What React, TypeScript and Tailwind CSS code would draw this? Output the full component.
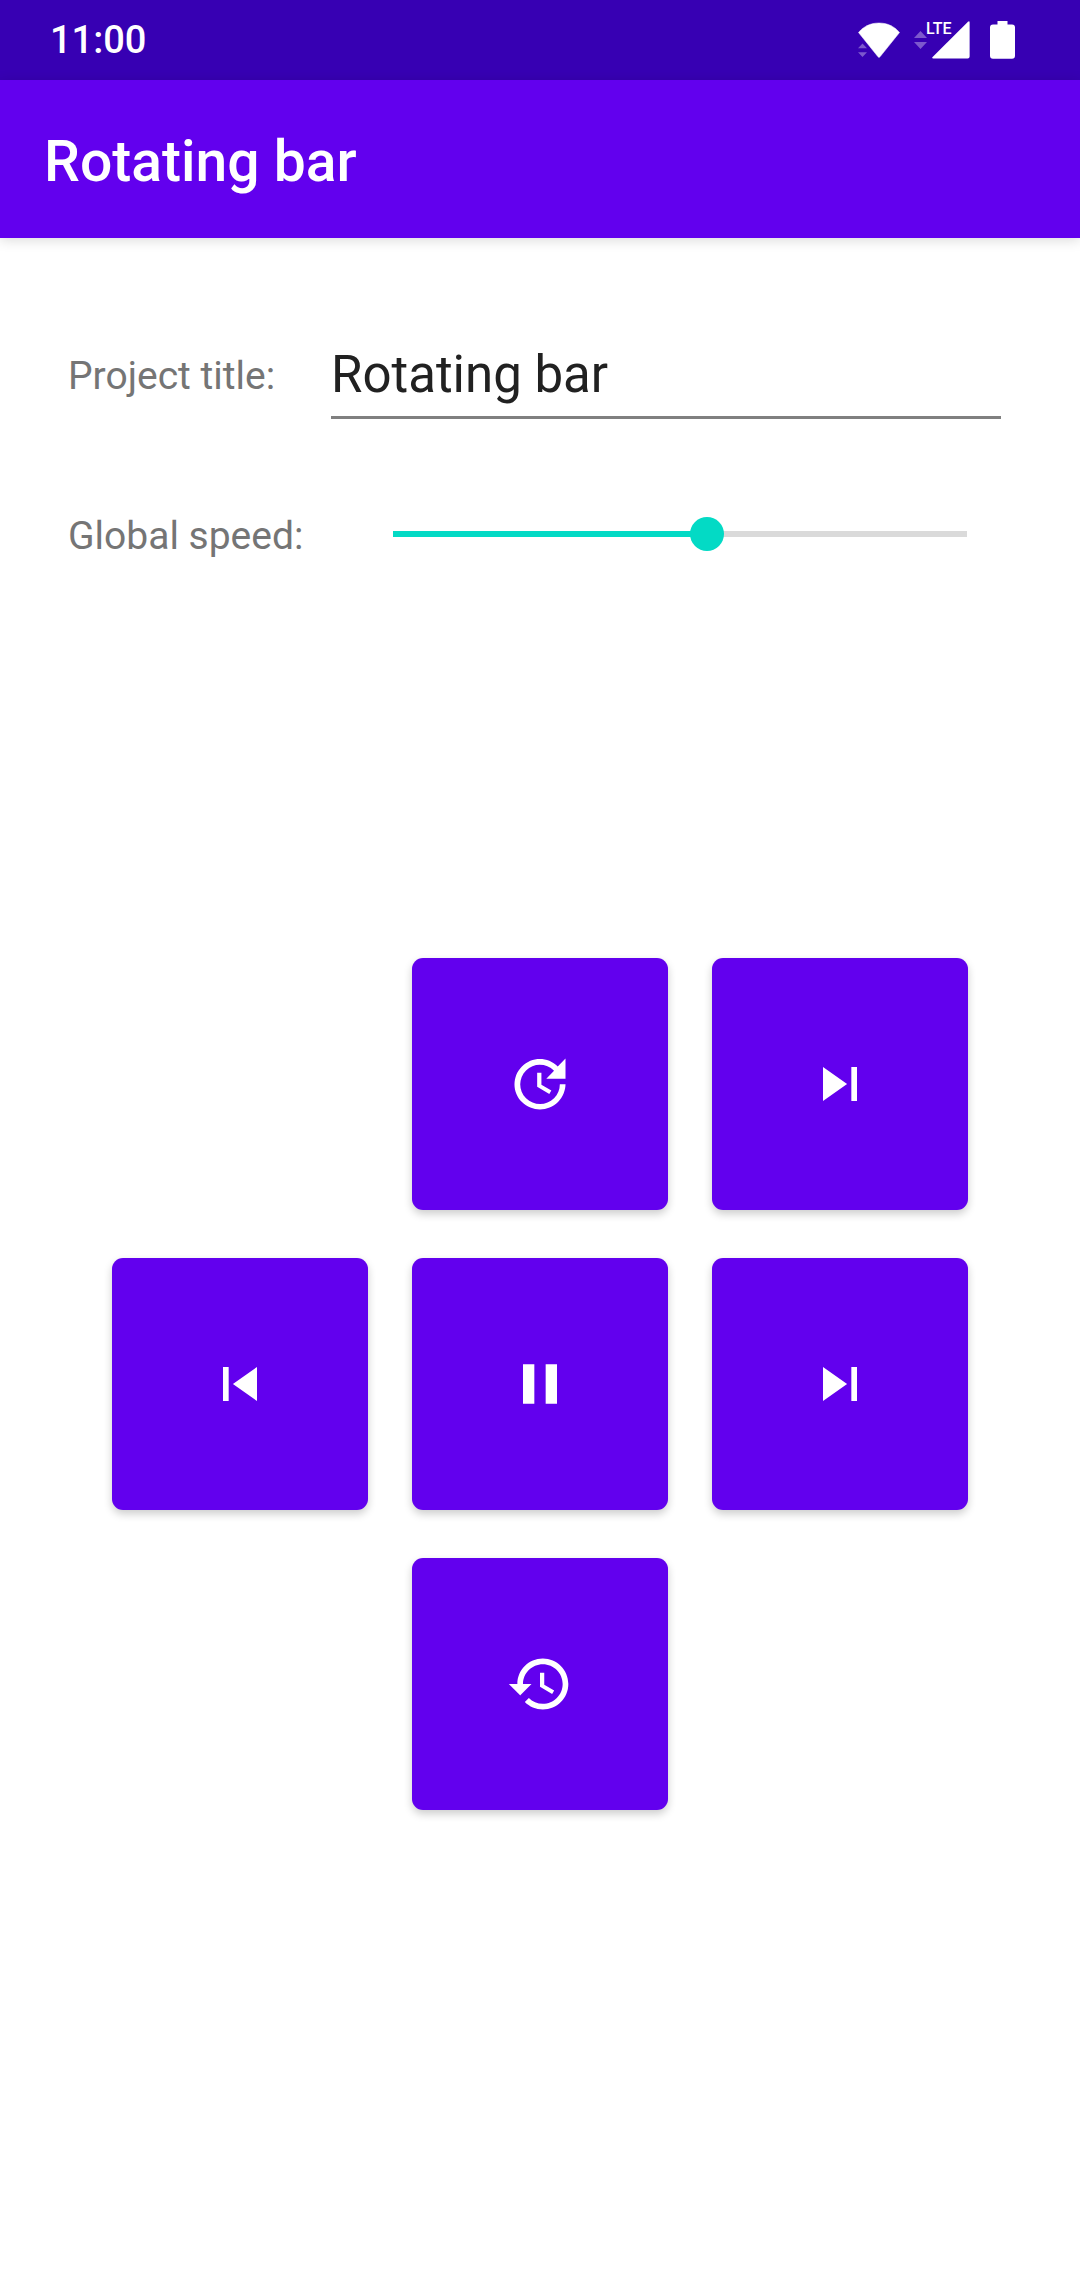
import { useState } from "react";
import type { ReactNode } from "react";

function WifiIcon() {
  return (
    <svg viewBox="0 0 42 38" className="h-[38px] w-[42px]" aria-hidden="true">
      <path d="M0.5 11.5C6 5 13 2 21 2s15 3 20.500 9.500L22 35.800q-1 1.200-2 0z" fill="#fff" stroke="#fff" strokeWidth="0.500" strokeLinejoin="round" />
      <path d="M4.500 22.500L9 27.200H0z M4.500 36L9 31.200H0z" fill="#7d58cd" />
    </svg>
  );
}

function SignalIcon() {
  return (
    <svg viewBox="0 0 56 38" className="h-[38px] w-[56px]" aria-hidden="true">
      <path d="M6.500 10L13 17H0z M6.500 28L13 21H0z" fill="#7d58cd" />
      <path d="M18.600 36L54 0.700Q55.600-0.400 55.600 1.500V35.500Q55.600 37.500 53.600 37.500H19.400Q17.400 37.400 18.600 36z" fill="#fff" />
    </svg>
  );
}

function BatteryIcon() {
  return (
    <svg viewBox="0 0 25 38" className="h-[38px] w-[25px]" aria-hidden="true">
      <path d="M7.500 0H17.500V3.500H22Q25 3.500 25 6.500V34.500Q25 37.700 22 37.700H3Q0 37.700 0 34.500V6.500Q0 3.500 3 3.500H7.500z" fill="#fff" />
    </svg>
  );
}

function Icon({ d }: { d: string }) {
  return (
    <svg viewBox="0 0 24 24" fill="currentColor" className="size-[68px]" aria-hidden="true">
      <path d={d} />
    </svg>
  );
}

const NEXT = "M6 18l8.500-6L6 6v12zM16 6v12h2V6h-2z";
const PREVIOUS = "M6 6h2v12H6zm3.500 6l8.500 6V6z";
const PAUSE = "M6 19h4V5H6v14zm8-14v14h4V5h-4z";
const UPDATE =
  "M21 10.120h-6.780l2.740-2.820c-2.730-2.700-7.150-2.800-9.880-.1-2.730 2.710-2.730 7.080 0 9.790s7.150 2.710 9.880 0C18.320 15.650 19 14.080 19 12.100h2c0 1.980-.88 4.550-2.640 6.290-3.510 3.480-9.210 3.480-12.720 0-3.500-3.470-3.530-9.110-.02-12.580s9.140-3.470 12.650 0L21 3v7.120zM12.500 8v4.250l3.500 2.080-.72 1.210L11 13V8h1.500z";
const HISTORY =
  "M13 3c-4.970 0-9 4.030-9 9H1l3.890 3.890.07.14L9 12H6c0-3.870 3.130-7 7-7s7 3.130 7 7-3.130 7-7 7c-1.930 0-3.680-.79-4.940-2.060l-1.420 1.420C8.270 19.990 10.510 21 13 21c4.970 0 9-4.030 9-9s-4.030-9-9-9zm-1 5v5l4.280 2.540.72-1.210-3.500-2.080V8H12z";

function PadButton({ label, className = "", children }: { label: string; className?: string; children: ReactNode }) {
  return (
    <button
      type="button"
      aria-label={label}
      className={`flex h-[252px] items-center justify-center rounded-[11px] bg-[#6200ee] text-white shadow-[0_4px_8px_rgba(0,0,0,0.2)] ${className}`}
    >
      {children}
    </button>
  );
}

export default function App() {
  const [title, setTitle] = useState("Rotating bar");
  const [speed, setSpeed] = useState(547);

  return (
    <div className="min-h-screen bg-white font-[Roboto,sans-serif]">
      <div className="flex h-20 items-center justify-between bg-[#3700b3] pr-[65px] pl-[50px] text-white">
        <span className="text-[38px] leading-none font-medium">11:00</span>
        <div className="flex items-center">
          <WifiIcon />
          <div className="relative ml-3.5 flex">
            <SignalIcon />
            <span className="absolute top-0 left-3 text-[16px] leading-none font-medium">LTE</span>
          </div>
          <div className="ml-5">
            <BatteryIcon />
          </div>
        </div>
      </div>

      <header className="flex h-[158px] items-center bg-[#6200ee] px-11 pt-1 shadow-[0_2px_12px_rgba(0,0,0,0.15)]">
        <h1 className="text-[57px] leading-none font-medium text-white">Rotating bar</h1>
      </header>

      <main>
        <div className="mt-[90px] flex items-center pr-[79px] pl-[68px]">
          <label htmlFor="project-title" className="w-[263px] shrink-0 pt-1 text-[39px] leading-[46px] text-[#757575]">
            Project title:
          </label>
          <input
            id="project-title"
            type="text"
            value={title}
            onChange={(e) => setTitle(e.target.value)}
            className="h-[91px] min-w-0 flex-1 border-b-3 border-[#808080] bg-transparent pt-1 text-[51px] text-[#212121] outline-none"
          />
        </div>

        <div className="mt-[90px] flex items-center pr-24 pl-[68px]">
          <label htmlFor="global-speed" className="w-[308px] shrink-0 pt-1 text-[39px] leading-[46px] text-[#757575]">
            Global speed:
          </label>
          <input
            id="global-speed"
            type="range"
            min={0}
            max={1000}
            value={speed}
            onChange={(e) => setSpeed(Number(e.target.value))}
            style={{ backgroundImage: `linear-gradient(to right, #03dac5 ${speed / 10}%, #dadada ${speed / 10}%)` }}
            className="h-[34px] min-w-0 flex-1 appearance-none bg-[length:calc(100%-34px)_6px] bg-center bg-no-repeat outline-none [&::-webkit-slider-thumb]:size-[34px] [&::-webkit-slider-thumb]:appearance-none [&::-webkit-slider-thumb]:rounded-full [&::-webkit-slider-thumb]:bg-[#03dac5]"
          />
        </div>

        <div className="mt-[399px] grid grid-cols-3 gap-x-11 gap-y-12 px-28 pb-12">
          <PadButton label="Faster" className="col-start-2">
            <Icon d={UPDATE} />
          </PadButton>
          <PadButton label="Skip to end">
            <Icon d={NEXT} />
          </PadButton>
          <PadButton label="Previous">
            <Icon d={PREVIOUS} />
          </PadButton>
          <PadButton label="Pause">
            <Icon d={PAUSE} />
          </PadButton>
          <PadButton label="Next">
            <Icon d={NEXT} />
          </PadButton>
          <PadButton label="Slower" className="col-start-2">
            <Icon d={HISTORY} />
          </PadButton>
        </div>
      </main>
    </div>
  );
}
